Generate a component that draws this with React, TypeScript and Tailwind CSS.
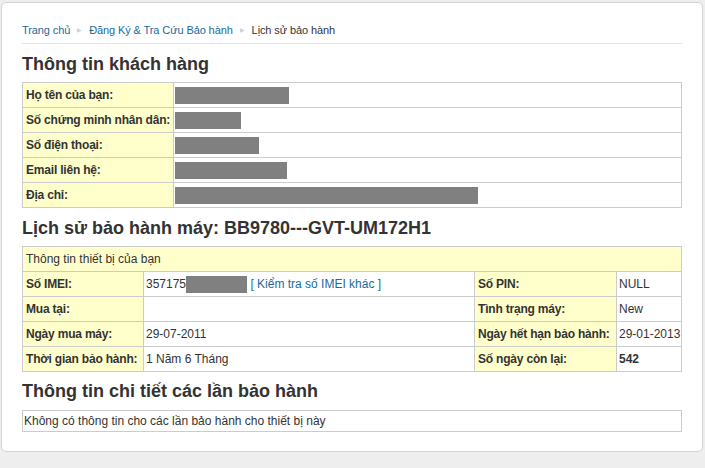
const customer = [
  { label: 'Họ tên của bạn:', w: 114 },
  { label: 'Số chứng minh nhân dân:', w: 66 },
  { label: 'Số điện thoại:', w: 84 },
  { label: 'Email liên hệ:', w: 112 },
  { label: 'Địa chỉ:', w: 303 },
]

const Mask = ({ w }: { w: number }) => (
  <span className="inline-block h-[17px] bg-[#808080] align-middle" style={{ width: w }} />
)

export default function App() {
  const label = 'border border-[#cccccc] bg-[#ffffcc] px-[3px] font-bold text-[#333] whitespace-nowrap tracking-[-0.2px]'
  const cell = 'border border-[#cccccc] px-[2px] text-[#333] whitespace-nowrap'

  return (
    <div className="min-h-[468px] bg-[#eeeeee] pt-[2px] pl-[1px] pr-[2px] font-['Liberation_Sans',Arial,sans-serif] text-[12px]">
      <div className="h-[450px] rounded-[5px] border border-[#d4d4d4] bg-white px-[20px] pt-[19px]">
        {/* breadcrumb */}
        <div className="flex items-center gap-[7px] border-b border-[#e4e4e4] pb-[5px] text-[11px] leading-[16px] tracking-[-0.1px]">
          <span className="text-[#1a6b9c]">Trang chủ</span>
          <span className="text-[6px] text-[#d0d0d0]">▶</span>
          <span className="text-[#1a6b9c]">Đăng Ký &amp; Tra Cứu Bảo hành</span>
          <span className="text-[6px] text-[#d0d0d0]">▶</span>
          <span className="text-[#333]">Lịch sử bảo hành</span>
        </div>

        <h2 className="mt-[9px] mb-[7px] text-[18px] leading-[22px] font-bold text-[#333]">Thông tin khách hàng</h2>
        <table className="w-full table-fixed border-collapse">
          <colgroup>
            <col className="w-[151px]" />
            <col />
          </colgroup>
          <tbody>
            {customer.map((r) => (
              <tr key={r.label} className="h-[25px]">
                <td className={label}>{r.label}</td>
                <td className="border border-[#cccccc] py-0 pl-[1px]">
                  <Mask w={r.w} />
                </td>
              </tr>
            ))}
          </tbody>
        </table>

        <h2 className="mt-[9px] mb-[7px] text-[18px] leading-[22px] font-bold text-[#333]">
          Lịch sử bảo hành máy: BB9780---GVT-UM172H1
        </h2>
        <table className="w-full table-fixed border-collapse">
          <colgroup>
            <col className="w-[121px]" />
            <col className="w-[331px]" />
            <col className="w-[142px]" />
            <col />
          </colgroup>
          <tbody>
            <tr className="h-[25px]">
              <td colSpan={4} className="border border-[#cccccc] bg-[#ffffcc] px-[3px] text-[#333]">
                Thông tin thiết bị của bạn
              </td>
            </tr>
            <tr className="h-[25px]">
              <td className={label}>Số IMEI:</td>
              <td className={cell}>
                357175<Mask w={61} />{' '}
                <span className="text-[#1a6b9c]">[ Kiểm tra số IMEI khác ]</span>
              </td>
              <td className={label}>Số PIN:</td>
              <td className={cell}>NULL</td>
            </tr>
            <tr className="h-[25px]">
              <td className={label}>Mua tại:</td>
              <td className={cell}></td>
              <td className={label}>Tình trạng máy:</td>
              <td className={cell}>New</td>
            </tr>
            <tr className="h-[25px]">
              <td className={label}>Ngày mua máy:</td>
              <td className={cell}>29-07-2011</td>
              <td className={label}>Ngày hết hạn bảo hành:</td>
              <td className={cell}>29-01-2013</td>
            </tr>
            <tr className="h-[25px]">
              <td className={label}>Thời gian bảo hành:</td>
              <td className={cell}>1 Năm 6 Tháng</td>
              <td className={label}>Số ngày còn lại:</td>
              <td className={`${cell} font-bold`}>542</td>
            </tr>
          </tbody>
        </table>

        <h2 className="mt-[8px] mb-[8px] text-[18px] leading-[22px] font-bold text-[#333]">
          Thông tin chi tiết các lần bảo hành
        </h2>
        <div className="h-[22px] border border-[#cccccc] px-[1px] leading-[20px] text-[#333]">
          Không có thông tin cho các lần bảo hành cho thiết bị này
        </div>
      </div>
    </div>
  )
}
